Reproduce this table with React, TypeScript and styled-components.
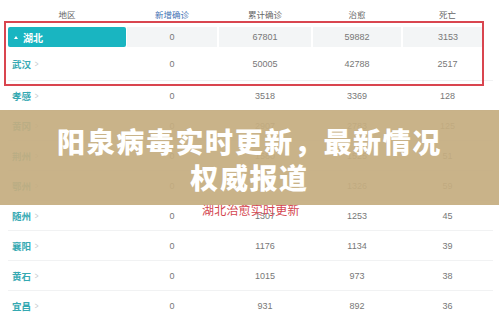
import React from 'react'
import styled, { createGlobalStyle } from 'styled-components'

const GlobalStyle = createGlobalStyle`
    html, body {
        margin: 0;
        padding: 0;
        background: #ffffff;
    }
    body {
        font-family: "Liberation Sans", "Noto Sans CJK SC", sans-serif;
        overflow: hidden;
    }
`

const Page = styled.div`
    position: relative;
    width: 499px;
    height: 317px;
    overflow: hidden;
    background: #ffffff;
`

const Table = styled.div`
    padding: 0 6px 0 8px;
`

const Row = styled.div<{ $height: number; $line?: boolean }>`
    display: grid;
    grid-template-columns: 118px 92px 94px 90px 1fr;
    height: ${p => p.$height}px;
    align-items: center;
    box-sizing: border-box;
    border-bottom: ${p => (p.$line ? '1px solid #f1f2f3' : 'none')};
`

const HeaderRow = styled(Row)`
    padding-top: 9px;
    align-items: start;
`

const HeadCell = styled.div<{ $blue?: boolean }>`
    text-align: center;
    font-size: 8.5px;
    color: ${p => (p.$blue ? '#3f72b4' : '#666')};
    line-height: 12px;
`

const HubeiRow = styled(Row)`
    margin-top: 6px;
    align-items: stretch;
`

const ProvinceTag = styled.div`
    background: #19b5c1;
    border-radius: 2px;
    display: flex;
    align-items: center;
    gap: 5px;
    padding-left: 6px;
    color: #ffffff;
    font-weight: bold;
    font-size: 10px;
`

const Triangle = styled.span`
    width: 0;
    height: 0;
    border-left: 2.5px solid transparent;
    border-right: 2.5px solid transparent;
    border-bottom: 3px solid #ffffff;
`

const GreyCell = styled.div<{ $last?: boolean }>`
    background: #f3f5f6;
    margin: 0 ${p => (p.$last ? 11 : 1)}px 0 1px;
    padding-left: ${p => (p.$last ? 11 : 0)}px;
    display: flex;
    align-items: center;
    justify-content: center;
    font-size: 9px;
    color: #777;
`

const NumCell = styled.div`
    text-align: center;
    font-size: 9px;
    color: #777;
`

const CityCell = styled.div`
    padding-left: 4px;
    font-size: 9.5px;
    font-weight: bold;
    color: #35a9b2;
    display: flex;
    align-items: center;
    gap: 3px;
`

const Chevron = styled.span`
    color: #c4c8cc;
    font-weight: normal;
    font-size: 9px;
    transform: scaleX(0.7);
`

const RedFrame = styled.div`
    position: absolute;
    left: 4px;
    top: 21px;
    width: 480px;
    height: 65px;
    box-sizing: border-box;
    border: 2px solid #d9454f;
    pointer-events: none;
`

const Caption = styled.div`
    position: absolute;
    left: 202px;
    top: 201px;
    font-size: 12px;
    color: #d4464f;
    letter-spacing: 0.2px;
`

const Banner = styled.div`
    position: absolute;
    left: 0;
    right: 0;
    top: 110px;
    height: 95px;
    background: rgba(197, 173, 128, 0.93);
    display: flex;
    flex-direction: column;
    align-items: center;
    justify-content: center;
    padding-top: 2px;
    box-sizing: border-box;
`

const BannerLine = styled.div`
    font-family: "Noto Sans CJK SC", sans-serif;
    font-weight: 900;
    font-size: 28px;
    letter-spacing: 1.6px;
    line-height: 36px;
    color: #ffffff;
`

const cities = [
    { name: '孝感', total: '3518', cured: '3369', dead: '128' },
    { name: '黄冈', total: '2907', cured: '2783', dead: '125' },
    { name: '荆州', total: '1580', cured: '1525', dead: '51' },
    { name: '鄂州', total: '1394', cured: '1326', dead: '59' },
    { name: '随州', total: '1307', cured: '1253', dead: '45' },
    { name: '襄阳', total: '1176', cured: '1134', dead: '39' },
    { name: '黄石', total: '1015', cured: '973', dead: '38' },
    { name: '宜昌', total: '931', cured: '892', dead: '36' },
]

export default function App() {
    return (
        <Page>
            <GlobalStyle />
            <Table>
                <HeaderRow $height={21}>
                    <HeadCell>地区</HeadCell>
                    <HeadCell $blue>新增确诊</HeadCell>
                    <HeadCell>累计确诊</HeadCell>
                    <HeadCell>治愈</HeadCell>
                    <HeadCell>死亡</HeadCell>
                </HeaderRow>
                <HubeiRow $height={26 - 6}>
                    <ProvinceTag>
                        <Triangle />
                        湖北
                    </ProvinceTag>
                    <GreyCell>0</GreyCell>
                    <GreyCell>67801</GreyCell>
                    <GreyCell>59882</GreyCell>
                    <GreyCell $last>3153</GreyCell>
                </HubeiRow>
                <Row $height={34} $line>
                    <CityCell>武汉<Chevron>&gt;</Chevron></CityCell>
                    <NumCell>0</NumCell>
                    <NumCell>50005</NumCell>
                    <NumCell>42788</NumCell>
                    <NumCell>2517</NumCell>
                </Row>
                {cities.map(c => (
                    <Row key={c.name} $height={30} $line>
                        <CityCell>{c.name}<Chevron>&gt;</Chevron></CityCell>
                        <NumCell>0</NumCell>
                        <NumCell>{c.total}</NumCell>
                        <NumCell>{c.cured}</NumCell>
                        <NumCell>{c.dead}</NumCell>
                    </Row>
                ))}
            </Table>
            <RedFrame />
            <Caption>湖北治愈实时更新</Caption>
            <Banner>
                <BannerLine>阳泉病毒实时更新，最新情况</BannerLine>
                <BannerLine>权威报道</BannerLine>
            </Banner>
        </Page>
    )
}
